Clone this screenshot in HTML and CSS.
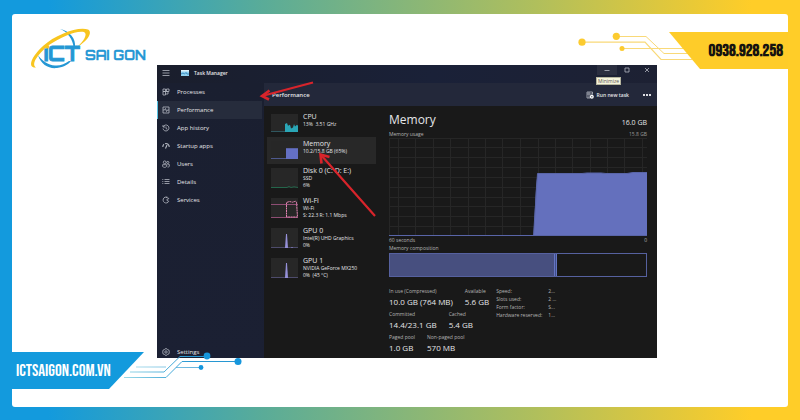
FILE: index.html
```html
<!DOCTYPE html>
<html lang="en">
<head>
<meta charset="utf-8">
<meta name="viewport" content="width=device-width, initial-scale=1">
<title>ICT Sai Gon - Task Manager</title>
<link rel="stylesheet" href="styles.css">
</head>
<body>
<main class="card">
  <aside class="side side-left">
    <a class="logo" href="#" aria-label="ICT Sai Gon">
      <svg width="122" height="46" viewBox="28 26 122 46">
        <path d="M60 29C70 31 76 39 75 47L73.500 47C73 40 68 32 60 29Z" fill="#2497d4"/>
        <path d="M38 55C41 65 49 69 57 68C64 67 69 64 71 61L69 61C65 64 60 66 55 65.500C48 65 42 61 38 55Z" fill="#2497d4"/>
        <path d="M36 67.500C27 68 31 57 43 46C56 34 79 26 88 29.500C93 32 88 41 77 47C84 41 88 34 84 32C77 30 61 37 49 45C37 55 31 64 36 67.500Z" fill="#f8c51f"/>
        <circle cx="47.500" cy="47" r="2" fill="#f8c51f"/>
        <text class="logo-main" x="44" y="61">ıCT</text>
        <text class="logo-sub" x="85" y="60">SAI GON</text>
      </svg>
    </a>
    <div class="tag-row">
      <a class="tag tag-site" href="#">ICTSAIGON.COM.VN</a>
      <svg class="circuit circuit-left" width="120" height="32" viewBox="122 350 120 32" aria-hidden="true">
        <defs>
          <linearGradient id="fade" gradientUnits="userSpaceOnUse" x1="122" x2="190" y1="0" y2="0">
            <stop offset="0" stop-color="#9edbe8"/><stop offset="1" stop-color="#2797d2"/>
          </linearGradient>
        </defs>
        <g fill="none" stroke="url(#fade)">
          <path d="M207 356.500H180L164 372H130"/>
          <path d="M238 361.500H182L166 377.500H124"/>
          <path d="M201 367.500H176M166 367H136" stroke-width=".7"/>
        </g>
        <g fill="#1696dc"><circle cx="207" cy="356" r="3.400"/><circle cx="238" cy="361.500" r="3.500"/><circle cx="201" cy="367.500" r="2.400"/></g>
      </svg>
    </div>
  </aside>

  <section class="window" aria-label="Task Manager">
    <header class="titlebar">
      <button class="icon-btn" aria-label="Menu"><svg width="8" height="8" viewBox="0 0 8 8"><path d="M.5 1.500h7M.5 4h7M.5 6.500h7"/></svg></button>
      <svg class="app-icon" width="8" height="6" viewBox="0 0 8 6"><path fill="#8fd0ef" d="M0 0h8v6H0z"/><path fill="#dff3fb" d="M0 0h8v1.500H0z"/><path d="M0 4l2-1 1.500 1L5 2.500 6 4h2" fill="none" stroke="#2678b4" stroke-width=".8"/></svg>
      <h1 class="app-title">Task Manager</h1>
      <div class="controls">
        <button class="control control-hover" aria-label="Minimize"><svg width="6" height="6" viewBox="0 0 6 6"><path d="M.5 3.500h5"/></svg></button>
        <button class="control" aria-label="Maximize"><svg width="6" height="6" viewBox="0 0 6 6"><path d="M1 1h4v4H1z"/></svg></button>
        <button class="control" aria-label="Close"><svg width="6" height="6" viewBox="0 0 6 6"><path d="M1 1l4 4M5 1L1 5"/></svg></button>
        <span class="tooltip" role="tooltip">Minimize</span>
      </div>
    </header>

    <nav class="nav">
      <a class="nav-item" href="#"><svg width="8" height="8" viewBox="0 0 8 8"><path d="M1 1h2.500v2.500H1zM1 3.500h2.500V7H1zM3.500 3.500H6V6H3.500M4.500 1H7v2.500H4.500z"/></svg>Processes</a>
      <a class="nav-item active" href="#"><svg width="8" height="8" viewBox="0 0 8 8"><path d="M1 1h6v6H1zM1 4h1.500l1-1.500 1 3L5.500 4H7"/></svg>Performance</a>
      <a class="nav-item" href="#"><svg width="8" height="8" viewBox="0 0 8 8"><path d="M1 1v2h2M1.200 2.800a3 3 0 1 1-.2 1.700M4 2.500v2l1.500.8"/></svg>App history</a>
      <a class="nav-item" href="#"><svg width="8" height="8" viewBox="0 0 8 8"><path d="M.8 5A3.200 3.200 0 0 1 2 2.300M3 1.700A3.200 3.200 0 0 1 7.200 5M3.500 6.500L5 3" stroke-width="1.100"/></svg>Startup apps</a>
      <a class="nav-item" href="#"><svg width="8" height="8" viewBox="0 0 8 8"><circle cx="2.700" cy="2.300" r="1.400"/><circle cx="5.800" cy="2.500" r="1.100"/><path d="M.6 4.700h4v1.200c0 2-4 2-4 0zM5.500 4.700h2v1c0 1-.8 1.500-2 1.300"/></svg>Users</a>
      <a class="nav-item" href="#"><svg width="8" height="8" viewBox="0 0 8 8"><path d="M.3 1.500h1M2.500 1.500h5M.3 3.500h1M2.500 3.500h5M.3 5.500h1M2.500 5.500h5"/></svg>Details</a>
      <a class="nav-item" href="#"><svg width="8" height="8" viewBox="0 0 8 8"><path d="M6.500 2.200A3 3 0 1 0 6.800 5.300L5 4.500V3.200l1.800-.5zM4 1l1 1"/></svg>Services</a>
      <a class="nav-item nav-bottom" href="#"><svg width="8" height="8" viewBox="0 0 8 8"><path d="M3 .8h2l.6.9 1.300.3.400 2-.4 2-1.300.3-.6.9H3l-.6-.9L1.100 6l-.4-2 .4-2 1.300-.3z"/><circle cx="4" cy="4" r="1.200"/></svg>Settings</a>
    </nav>

    <div class="commandbar">
      <h2 class="page-name">Performance</h2>
      <button class="run"><svg width="8" height="8" viewBox="0 0 8 8"><path d="M4 7H1V1h5.500v2.500M1 3h5.500M3 1v6"/><circle cx="5.800" cy="5.800" r="2" fill="#fff" stroke="none"/><path d="M5 5.800h1.500" stroke="#23283a"/></svg>Run new task</button>
      <button class="more" aria-label="More"><svg width="8" height="2" viewBox="0 0 8 2"><path d="M0 0h2v2H0zM3 0h2v2H3zM6 0h2v2H6z" fill="#dcdde2" stroke="none"/></svg></button>
    </div>

    <div class="content">
      <ul class="resources">
        <li class="resource short">
          <svg class="thumb" viewBox="0 0 27 20" preserveAspectRatio="none"><path d="M0 19.500H14" stroke="#315d65"/><path d="M14 20V11l2-1 1 3 2-1 1 4 2-1 1-4 1 3 2-2 1 1v7z" fill="#2aa6b6"/></svg>
          <div><h3>CPU</h3><p>13% &nbsp;3.51 GHz</p></div>
        </li>
        <li class="resource short selected">
          <svg class="thumb" viewBox="0 0 27 20" preserveAspectRatio="none"><path d="M0 19.500H15" stroke="#53609a"/><path d="M15 20V8h12v12z" fill="#6470c4"/></svg>
          <div><h3>Memory</h3><p>10.2/15.8 GB (65%)</p></div>
        </li>
        <li class="resource">
          <svg class="thumb" viewBox="0 0 27 20" preserveAspectRatio="none"><path d="M0 19.500H16l2-1 2 1 3-.7 4 .7" fill="none" stroke="#24664b"/></svg>
          <div><h3>Disk 0 (C: D: E:)</h3><p>SSD</p><p>6%</p></div>
        </li>
        <li class="resource">
          <svg class="thumb" viewBox="0 0 27 20" preserveAspectRatio="none"><path d="M0 6.500H27M0 19.500H27" stroke="#8e4d73" fill="none"/><path d="M15.500 19V4.500l3-1 3 .7 3-1 1 1L26.500 19z" fill="none" stroke="#e184b2" stroke-dasharray="2 .5"/></svg>
          <div><h3>Wi-Fi</h3><p>Wi-Fi</p><p>S: 22.3 R: 1.1 Mbps</p></div>
        </li>
        <li class="resource">
          <svg class="thumb" viewBox="0 0 27 20" preserveAspectRatio="none"><path d="M0 19.500H27" stroke="#4d4b6b"/><path d="M14 20l1-14h1l1 14zM20 20l1-1 1 1z" fill="#9590d8"/></svg>
          <div><h3>GPU 0</h3><p>Intel(R) UHD Graphics</p><p>0%</p></div>
        </li>
        <li class="resource">
          <svg class="thumb" viewBox="0 0 27 20" preserveAspectRatio="none"><path d="M0 19.500H27" stroke="#4d4b6b"/><path d="M14 20l1-15h1l1 15z" fill="#9590d8"/></svg>
          <div><h3>GPU 1</h3><p>NVIDIA GeForce MX250</p><p>0% &nbsp;(45 °C)</p></div>
        </li>
      </ul>

      <section class="detail">
        <div class="split heading"><h2>Memory</h2><span class="total">16.0 GB</span></div>
        <div class="split caption"><span>Memory usage</span><span class="dim">15.8 GB</span></div>
        <svg class="chart" viewBox="0 0 258 98" preserveAspectRatio="none">
          <path class="grid-lines" d="M.5 0V98M9.500 0V98M26.500 0V98M44.500 0V98M61.500 0V98M79.500 0V98M96.500 0V98M113.500 0V98M131.500 0V98M149.500 0V98M166.500 0V98M183.500 0V98M201.500 0V98M218.500 0V98M235.500 0V98M253.500 0V98M0 .5H258M0 9.500H258M0 19.500H258M0 29.500H258M0 39.500H258M0 49.500H258M0 59.500H258M0 68.500H258M0 78.500H258M0 88.500H258"/>
          <path d="M144.500 98L147 49 148.500 35.500H193L198 35H212L217 35.500H238L244 34.500H258V98z" fill="#6470bd"/>
          <path d="M0 97.500H258M144.500 98L148.500 35.500H193L198 35H212L217 35.500H238L244 34.500H258" fill="none" stroke="#5965a8"/>
        </svg>
        <div class="split caption axis"><span>60 seconds</span><span>0</span></div>
        <div class="caption">Memory composition</div>
        <div class="composition" role="img" aria-label="Memory composition"><span class="used"></span><span class="modified"></span></div>
        <div class="stats">
          <div class="stat-rows">
            <dl><div><dt>In use (Compressed)</dt><dd>10.0 GB (764 MB)</dd></div><div><dt>Available</dt><dd>5.6 GB</dd></div></dl>
            <dl><div><dt>Committed</dt><dd>14.4/23.1 GB</dd></div><div><dt>Cached</dt><dd>5.4 GB</dd></div></dl>
            <dl><div><dt>Paged pool</dt><dd>1.0 GB</dd></div><div><dt>Non-paged pool</dt><dd>570 MB</dd></div></dl>
          </div>
          <table class="specs">
            <tr><th>Speed:</th><td>2...</td></tr>
            <tr><th>Slots used:</th><td>2 ...</td></tr>
            <tr><th>Form factor:</th><td>S...</td></tr>
            <tr><th>Hardware reserved:</th><td>1...</td></tr>
          </table>
        </div>
      </section>
    </div>

    <svg class="arrows" width="120" height="158" viewBox="258 62 120 158" aria-hidden="true">
      <g fill="none" stroke="#d8242b" stroke-width="2.200">
        <path d="M313 82.500L262 96M375 216L321 155"/>
        <path d="M269.500 90.500L262 96L269 99.500M321.500 163.500L320.500 154.500L329.500 157" stroke-width="2.600"/>
      </g>
    </svg>
  </section>

  <aside class="side side-right">
    <div class="tag-row">
      <svg class="circuit circuit-right" width="116" height="32" viewBox="577 30 116 32" aria-hidden="true">
        <g fill="none" stroke="#f9d978">
          <path d="M582 42.200H645L661 59.500H692" stroke-width="1.200"/>
          <path d="M616 36.500H646L664 53.500H688"/>
          <path d="M622 48.500H684" stroke-width="1.200"/>
        </g>
        <g fill="#fccb2f"><circle cx="582" cy="42.200" r="3.600"/><circle cx="616.300" cy="36.300" r="3.600"/><circle cx="622" cy="48.500" r="2.500"/></g>
      </svg>
      <a class="tag tag-phone" href="tel:0938928258">0938.928.258</a>
    </div>
  </aside>
</main>
</body>
</html>
```
FILE: styles.css
```css
* { box-sizing: border-box; margin: 0; padding: 0; }

body {
  min-height: 100vh;
  padding: 14px 12px 13px;
  background: linear-gradient(90deg, #139add 6%, #5aac98 33%, #b0bf5c 67%, #ffcd28 94%);
  font-family: "Open Sans", "Noto Sans", sans-serif;
}

a { color: inherit; text-decoration: none; }
button { border: 0; background: none; color: inherit; font: inherit; }
ul { list-style: none; }

.card {
  display: grid;
  grid-template-columns: 145px minmax(0, 1fr) 131px;
  min-height: calc(100vh - 27px);
  border-radius: 3px;
  background: #fff;
}

/* Branding columns */
.side { display: flex; flex-direction: column; }
.side-left { justify-content: space-between; padding: 12px 0 18px; }
.side-right { padding-top: 18px; }
.logo { margin-left: 16px; }
.logo svg { display: block; overflow: visible; }
.logo-main, .logo-sub { font-family: Orbitron, "DejaVu Sans", sans-serif; font-weight: bold; fill: #2497d4; stroke: #2497d4; }
.logo-main { font-size: 20px; stroke-width: 1px; }
.logo-sub { font-size: 13px; stroke-width: .3px; }

.tag-row { position: relative; display: flex; }
.tag {
  display: flex;
  align-items: center;
  height: 37px;
  font-family: "Bebas Neue", Roboto, sans-serif;
  font-size: 17px;
  white-space: nowrap;
}
.tag-site {
  width: 132px;
  padding-left: 4px;
  background: #139add;
  color: #fff;
  clip-path: polygon(0 0, 100% 0, 97px 100%, 0 100%);
}
.tag-phone {
  z-index: 2;
  justify-content: flex-end;
  width: 119px;
  margin-left: auto;
  padding-right: 5px;
  background: #fecc29;
  color: #151310;
  font-weight: bold;
  clip-path: polygon(0 0, 100% 0, 100% 100%, 31px 100%);
}
.circuit { position: absolute; z-index: 1; }
.circuit-left { left: 110px; top: -2px; }
.circuit-right { right: 95px; top: -2px; }

/* Task Manager window */
.window {
  position: relative;
  display: grid;
  grid-template-columns: 107px minmax(0, 1fr);
  grid-template-rows: 18px 23px 1fr;
  margin: 51px 0 49px;
  background: #1b2032;
  color: #e4e5e8;
  font-size: 6px;
  line-height: 8px;
}
.window svg { flex: none; fill: none; stroke: #b4b8c2; stroke-width: .8; }

.titlebar {
  grid-column: 1 / -1;
  display: flex;
  align-items: center;
  padding: 0 0 2px 5px;
  background: linear-gradient(90deg, #1a1e2c, #1a2138 55%, #1d2133);
}
.icon-btn { display: flex; }
.window .app-icon { margin: 0 5px 0 11px; stroke: none; }
.app-title { font-size: 5px; font-weight: 600; }
.controls { position: relative; display: flex; align-self: flex-start; margin-left: auto; }
.control { display: flex; align-items: center; justify-content: center; width: 20px; height: 10px; }
.control-hover { background: #2b2f40; }
.tooltip {
  position: absolute;
  left: -1px;
  top: 12px;
  z-index: 2;
  padding: 0 1px;
  border: 1px solid #b5b59e;
  background: #f5f4dc;
  color: #555;
  font-size: 5px;
  line-height: 6px;
}

.nav { grid-row: 2 / 4; display: flex; flex-direction: column; background: linear-gradient(#1a1f30, #1b2033); }
.nav-item { display: flex; align-items: center; gap: 7px; height: 18px; margin-right: 2px; padding-left: 5px; }
.nav-item.active { background: #262c3c; box-shadow: inset 1px 0 #57c3e4; }
.nav-bottom { margin-top: auto; height: 12px; }

.commandbar { display: flex; align-items: center; padding: 0 6px 0 8px; background: #23283a; }
.page-name { font-size: 6px; font-weight: 600; }
.run { display: flex; align-items: center; gap: 3px; margin-left: auto; font-size: 5px; font-weight: 600; }
.more { display: flex; margin-left: 14px; }

.content {
  display: grid;
  grid-template-columns: 112px minmax(0, 1fr);
  column-gap: 13px;
  padding: 4px 10px 0 0;
  background: #191919;
}

.resource { display: flex; align-items: flex-start; gap: 5px; height: 30px; margin-left: 3px; padding: 3px 0 0 4px; font-size: 5px; line-height: 7px; white-space: nowrap; }
.resource.short { height: 27px; }
.resource h3 { font-size: 7px; font-weight: 400; line-height: 8px; }
.resource.selected { background: #282828; }
.window .thumb { width: 27px; height: 20px; margin-top: 1px; background: #272727; stroke: none; stroke-width: 1; }
.short .thumb { height: 18px; }

.split { display: flex; align-items: center; justify-content: space-between; }
.heading { align-items: flex-end; height: 20px; }
.heading h2 { font-size: 12px; font-weight: 400; line-height: 20px; }
.total { font-size: 7px; line-height: 14px; }
.caption { height: 8px; font-size: 5px; color: #b5b5b5; }
.dim { color: #999; }
.window .chart { display: block; width: 100%; height: 98px; stroke: none; stroke-width: 1; }
.window .grid-lines { stroke: #262626; }
.composition { display: flex; height: 24px; margin-top: 1px; border: 1px solid #56619f; }
.used { width: 64%; background: #474f7f; }
.modified { width: 3px; border: solid #6574c2; border-width: 0 1px; background: #3f4f8a; }

.stats { display: flex; gap: 7px; padding-top: 10px; white-space: nowrap; }
.stat-rows dl { display: flex; gap: 12px; height: 23px; }
.stat-rows dt { font-size: 5px; line-height: 8px; color: #b5b5b5; }
.stat-rows dd { font-size: 8px; line-height: 13px; }
.specs { align-self: flex-start; border-collapse: collapse; font-size: 5px; line-height: 8px; color: #b5b5b5; }
.specs th { min-width: 52px; padding-right: 6px; font-weight: 400; text-align: left; }

.window .arrows { position: absolute; left: 101px; top: -3px; z-index: 3; stroke: none; pointer-events: none; }
```
